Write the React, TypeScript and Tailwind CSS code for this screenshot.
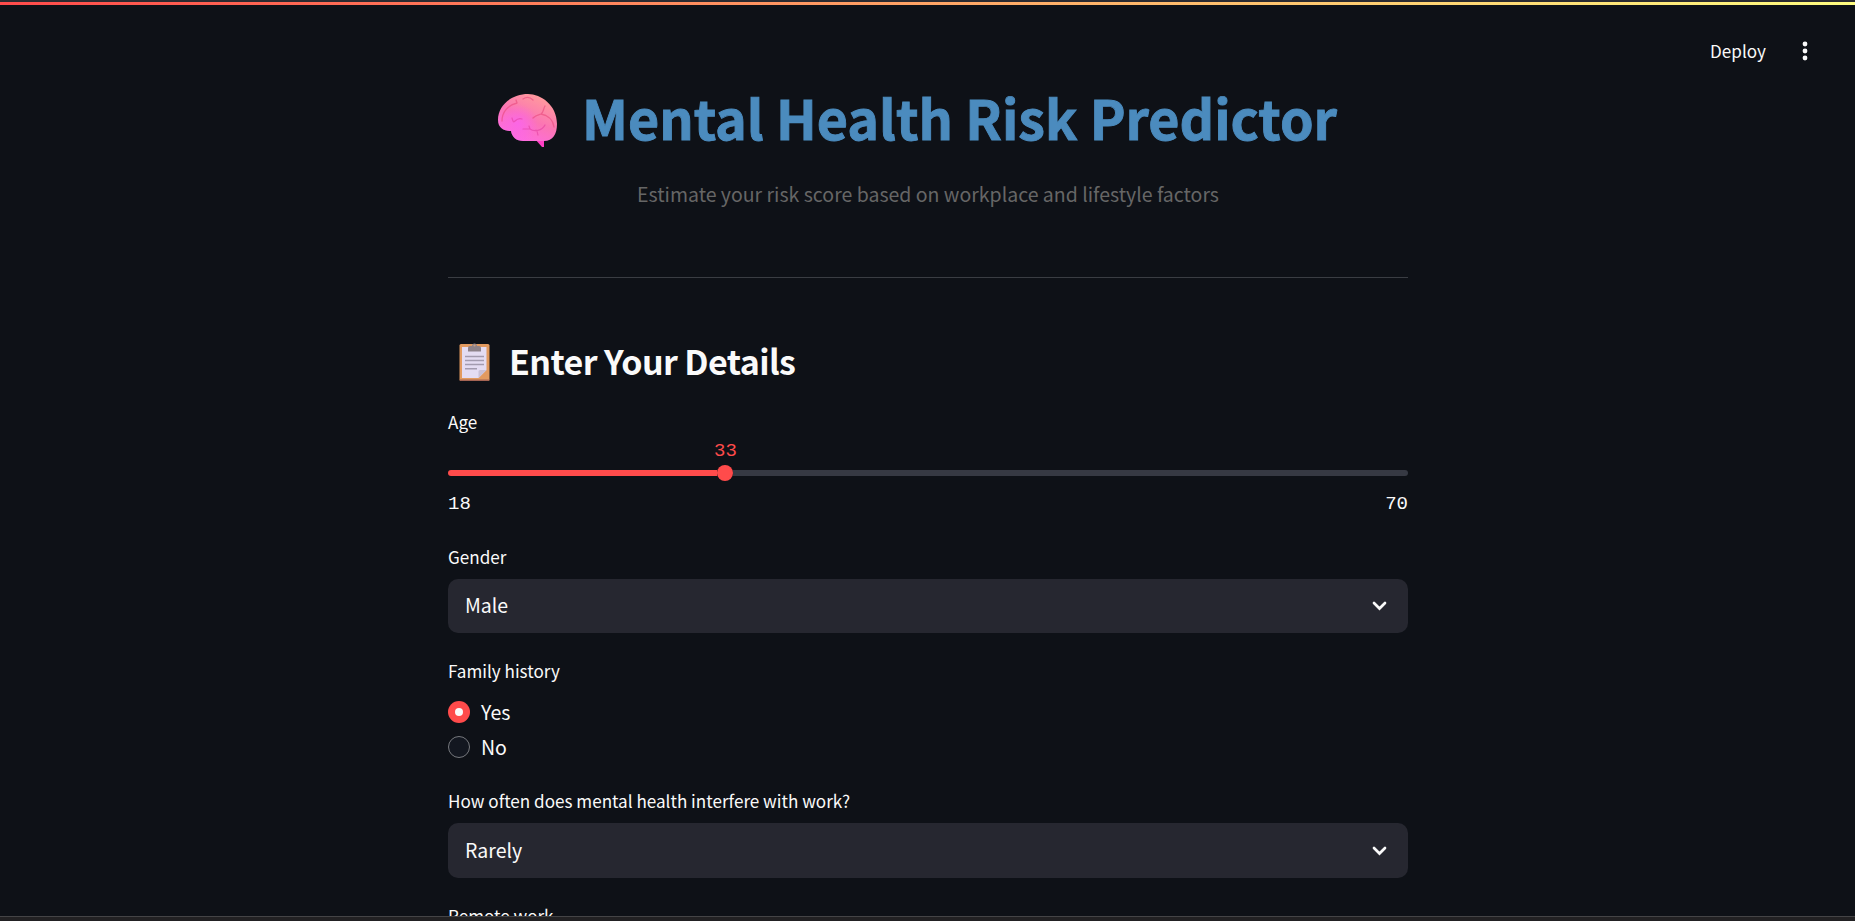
import type { ReactNode } from "react";

function Brain() {
  return (
    <svg className="mt-px h-[54px] w-[60px] shrink-0" viewBox="0 0 60 54" fill="none">
      <defs>
        <linearGradient id="brain" x1="40" y1="0" x2="18" y2="48" gradientUnits="userSpaceOnUse">
          <stop stopColor="#ff9b9b" />
          <stop offset=".5" stopColor="#fb75b4" />
          <stop offset="1" stopColor="#ff6ae8" />
        </linearGradient>
        <radialGradient id="glow" cx="20" cy="30" r="20" gradientUnits="userSpaceOnUse">
          <stop stopColor="#fb66e6" />
          <stop offset="1" stopColor="#fb66e6" stopOpacity="0" />
        </radialGradient>
      </defs>
      <path d="M37 45h9v8h-2z" fill="#ff3fc4" />
      <path d="M30 0C43 0 59 11 59 30c0 10-4 17-13 17H25c-7 0-11-4-12-10C6 37 0 34 0 26 0 11 14 0 30 0Z" fill="url(#brain)" />
      <path d="M30 0C43 0 59 11 59 30c0 10-4 17-13 17H25c-7 0-11-4-12-10C6 37 0 34 0 26 0 11 14 0 30 0Z" fill="url(#glow)" />
      <path d="M4 27c0-9 6-16 15-18M19 9l-1-3M25 5c3-2 7-2 10 1M47 12c-2 3-1 6-4 8-3 1-5 1-8 4M43 20c6 1 12 5 13 13" stroke="#e8477c" strokeOpacity=".6" strokeWidth="1.3" strokeLinecap="round" />
      <path d="M14 24c1 3 1 5 3 3 2-2 4-3 7-2M25 35h7c4 3 12 2 15-4M38 36c2 1 1 3 2 5M32 35l-1-3" stroke="#e03a9c" strokeOpacity=".55" strokeWidth="1.2" strokeLinecap="round" />
    </svg>
  );
}

function Clipboard() {
  return (
    <svg className="h-[39px] w-[31px] shrink-0" viewBox="0 0 31 39" fill="none">
      <rect x=".5" y="2" width="30" height="37" rx="1.5" fill="#e29a5f" />
      <path d="M.5 37.500h30a1.500 1.500 0 0 1-1.500 1.500H2A1.500 1.500 0 0 1 .5 37.500z" fill="#a56453" />
      <path d="M3 5h24.500v23l-8 8H3z" fill="#e4dcf2" />
      <path d="M19.500 36v-6.500a1.500 1.500 0 0 1 1.500-1.500h6.500z" fill="#c9c0d6" />
      <path d="M9 9.500V6a2 2 0 0 1 2-2h2a2.500 2.500 0 0 1 5 0h2a2 2 0 0 1 2 2v3.500z" fill="#8d8289" />
      <circle cx="15.500" cy="3.500" r="1.100" fill="#c99f80" />
      <path d="M6 14.500h19M6 18.500h19M6 22.500h19M6 26.800h12" stroke="#a39baf" strokeWidth="1.600" />
    </svg>
  );
}

function Label({ children }: { children: ReactNode }) {
  return <div className="h-[24px] text-[17.1px] leading-[21px] whitespace-nowrap">{children}</div>;
}

function Select({ value, className }: { value: string; className: string }) {
  return (
    <div className={"flex items-center justify-between rounded-[10px] bg-[#262730] pr-[21px] pl-[17px] " + className}>
      <span className="pb-[2px] text-[19.5px] leading-[28px]">{value}</span>
      <svg className="h-[10px] w-[15px]" viewBox="0 0 15 10" fill="none">
        <path d="M2 2l5.500 5.500L13 2" stroke="#fafafa" strokeWidth="2.700" strokeLinecap="round" />
      </svg>
    </div>
  );
}

function Radio({ label, checked }: { label: string; checked?: boolean }) {
  return (
    <div className="flex h-[22px] items-center gap-[11px]">
      {checked ? (
        <span className="flex size-[22px] items-center justify-center rounded-full bg-[#ff4b4b]">
          <span className="size-2 rounded-full bg-[#fafafa]" />
        </span>
      ) : (
        <span className="size-[22px] rounded-full border-[1.250px] border-[#76787d] bg-[#131720]" />
      )}
      <span className="pb-px text-[19.5px] leading-[28px]">{label}</span>
    </div>
  );
}

export default function App() {
  return (
    <div className="flex h-[921px] w-[1855px] flex-col overflow-hidden bg-[#0e1117] font-['Noto_Sans_CJK_SC',sans-serif] text-[#fafafa]">
      <div className="h-[2px] shrink-0 bg-[#2b2b31]" />
      <div className="h-[3px] shrink-0 bg-linear-to-r/srgb from-[#ff4b4b] to-[#fffd80]" />
      <div className="relative min-h-0 flex-1 overflow-hidden">
        <header className="absolute top-[32px] right-[47px] flex h-[28px] items-center gap-[36px]">
          <span className="text-[17.1px] leading-[28px]">Deploy</span>
          <svg className="h-[20px] w-[6px]" viewBox="0 0 6 20" fill="#fafafa">
            <circle cx="3" cy="3" r="2.400" />
            <circle cx="3" cy="10" r="2.400" />
            <circle cx="3" cy="17" r="2.400" />
          </svg>
        </header>
        <main className="ml-[448px] flex w-[960px] flex-col">
          <div className="mt-[80px] flex h-[70px] items-center pl-[50px]">
            <Brain />
            <h1 className="ml-[24px] pb-[7px] text-[53.800px] leading-[70px] font-bold whitespace-nowrap text-[#4b8bbe] [-webkit-text-stroke:0.9px_#4b8bbe]">Mental Health Risk Predictor</h1>
          </div>
          <p className="mt-[24px] h-[29px] text-center text-[19.5px] leading-[29px] text-[#666666]">Estimate your risk score based on workplace and lifestyle factors</p>
          <hr className="mt-[69px] border-t border-[#3a3d43]" />
          <div className="mt-[58px] mb-[2px] flex h-[50px] items-center pl-[11px]">
            <Clipboard />
            <h2 className="ml-[19px] text-[34px] leading-[50px] font-semibold tracking-[-0.6px] whitespace-nowrap">Enter Your Details</h2>
          </div>
          <div className="mt-[23px]">
            <Label>Age</Label>
          </div>
          <div className="mt-[4px] h-[24px] pl-[266px] font-['Liberation_Mono',monospace] text-[19px] leading-[24px] text-[#ff4b4b]">33</div>
          <div className="mt-[2px] flex h-[16px] items-center">
            <div className="h-[6px] w-[269px] rounded-l-full bg-[#ff4b4b]" />
            <div className="size-[16px] rounded-full bg-[#ff4b4b]" />
            <div className="h-[6px] flex-1 rounded-r-full bg-[#363943]" />
          </div>
          <div className="mt-[11px] flex h-[24px] justify-between font-['Liberation_Mono',monospace] text-[19px] leading-[24px]">
            <span>18</span>
            <span>70</span>
          </div>
          <div className="mt-[30px]">
            <Label>Gender</Label>
          </div>
          <Select value="Male" className="mt-[9px] h-[54px]" />
          <div className="mt-[27px]">
            <Label>Family history</Label>
          </div>
          <div className="mt-[17px] flex flex-col gap-[13px]">
            <Radio label="Yes" checked />
            <Radio label="No" />
          </div>
          <div className="mt-[32px]">
            <Label>How often does mental health interfere with work?</Label>
          </div>
          <Select value="Rarely" className="mt-[9px] h-[55px]" />
          <div className="mt-[27px]">
            <Label>Remote work</Label>
          </div>
        </main>
      </div>
      <div className="h-[5px] shrink-0 border-t border-[#444446] bg-[#222123]" />
    </div>
  );
}
